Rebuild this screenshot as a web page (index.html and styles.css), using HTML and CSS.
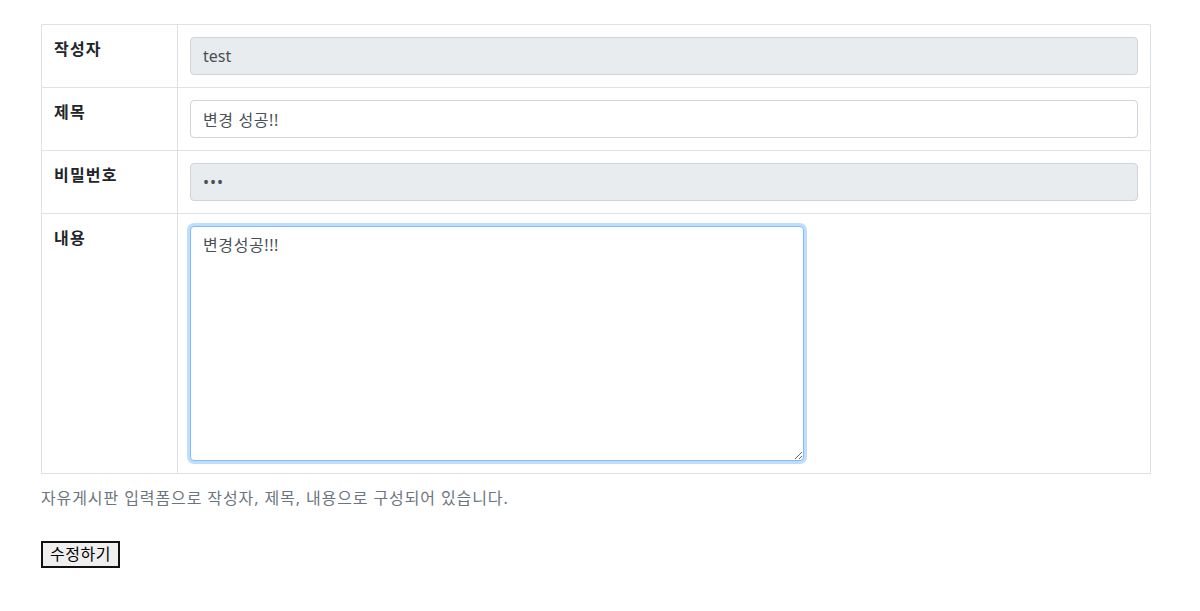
FILE: index.html
```html
<!DOCTYPE html>
<html lang="ko">
<head>
    <meta charset="UTF-8">
    <title>게시판 수정</title>
    <link rel="stylesheet" href="styles.css">
</head>
<body>
<div class="container">
    <form class="board-form">
        <table class="board-table">
            <caption>자유게시판 입력폼으로 작성자, 제목, 내용으로 구성되어 있습니다.</caption>
            <tr>
                <th>작성자</th>
                <td><input type="text" class="form-control" value="test" readonly></td>
            </tr>
            <tr>
                <th>제목</th>
                <td><input type="text" class="form-control ko" value="변경 성공!!"></td>
            </tr>
            <tr>
                <th>비밀번호</th>
                <td><input type="password" class="form-control" value="123" readonly></td>
            </tr>
            <tr>
                <th>내용</th>
                <td><textarea class="form-control ko content-area focus">변경성공!!!</textarea></td>
            </tr>
        </table>
        <button type="button" class="btn-submit">수정하기</button>
    </form>
</div>
</body>
</html>
```

FILE: styles.css
```css
*{margin: 0px;padding: 0px;box-sizing: border-box;}
body{
    font-family: "Noto Sans", "Noto Sans CJK KR", sans-serif;
    font-size: 16px;
    line-height: 24px;
    color: #212529;
    background: #fff;
}
.container{
    padding: 24px 49px 0 41px;
}
.board-table{
    width: 1110px;
    border-collapse: collapse;
    caption-side: bottom;
}
.board-table caption{
    text-align: left;
    color: #6c757d;
    padding: 12px 0;
    letter-spacing: 0.9px;
}
.board-table th,.board-table td{
    border: 1px solid #dee2e6;
    padding: 12px;
    vertical-align: top;
    text-align: left;
}
.board-table th{
    width: 136px;
    font-weight: 600;
    letter-spacing: 1.2px;
}
.form-control{
    display: block;
    width: 100%;
    height: 38px;
    padding: 6px 12px;
    font-family: inherit;
    font-size: 16px;
    line-height: 24px;
    color: #495057;
    background: #fff;
    border: 1px solid #ced4da;
    border-radius: 4px;
}
.form-control.ko{
    letter-spacing: 0.6px;
}
.form-control[readonly]{
    background: #e9ecef;
}
input[type=password]{
    letter-spacing: 1px;
}
.content-area{
    width: 614px;
    height: 235px;
    resize: both;
}
.content-area.focus{
    border-color: #80bdff;
    outline: 0;
    box-shadow: 0 0 0 3px rgba(0,123,255,.25);
}
.btn-submit{
    margin-top: 19px;
    font-family: inherit;
    font-size: 16px;
    line-height: 21px;
    letter-spacing: 0.5px;
    padding: 1px 6px;
    width: 79px;
    height: 27px;
    background: #efefef;
    border: 2px solid #111;
    color: #000;
}
```
